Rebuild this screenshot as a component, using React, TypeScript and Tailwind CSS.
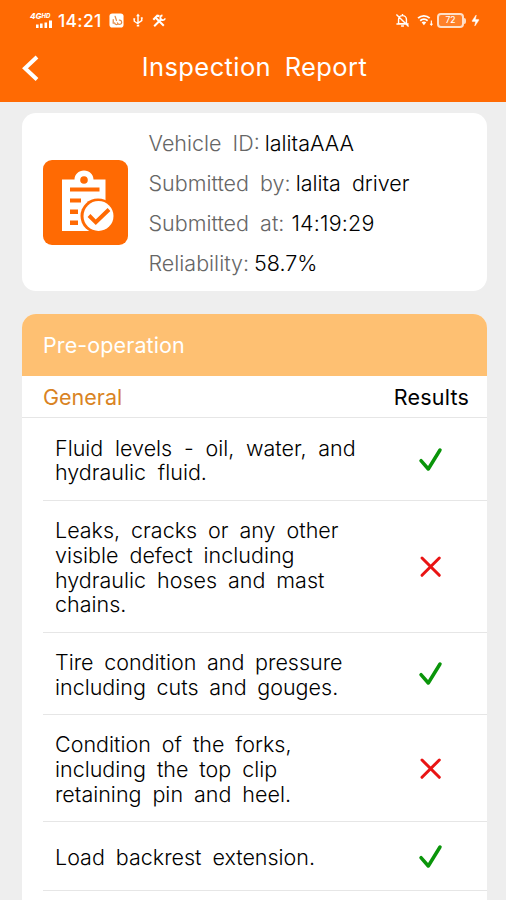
import { Zap } from 'lucide-react';
import { clsx } from 'clsx';

const details = [
  { label: 'Vehicle ID:', value: 'lalitaAAA' },
  { label: 'Submitted by:', value: 'lalita driver' },
  { label: 'Submitted at:', value: '14:19:29', className: 'pl-[2px] tracking-[0.2px]' },
  { label: 'Reliability:', value: '58.7%' },
];

const checks = [
  {
    text: 'Fluid levels - oil, water, and hydraulic fluid.',
    passed: true,
    height: 'h-[82.5px]',
    spacing: '[word-spacing:5.7px]',
  },
  {
    text: 'Leaks, cracks or any other visible defect including hydraulic hoses and mast chains.',
    passed: false,
    height: 'h-[132px]',
    spacing: '[word-spacing:4.9px]',
  },
  {
    text: 'Tire condition and pressure including cuts and gouges.',
    passed: true,
    height: 'h-[82.5px]',
    spacing: '[word-spacing:4.6px]',
  },
  {
    text: 'Condition of the forks, including the top clip retaining pin and heel.',
    passed: false,
    height: 'h-[107px]',
    spacing: '[word-spacing:4.9px]',
  },
  { text: 'Load backrest extension.', passed: true, height: 'h-[69px]', spacing: '[word-spacing:4.9px]' },
];

function StatusBar() {
  return (
    <div className="flex h-[41px] items-center justify-between pr-[26px] pl-[30px]">
      <div className="flex items-center">
        <div className="flex w-[23px] flex-col">
          <span className="flex items-start text-[8px] leading-[7px] font-extrabold italic">
            4G<span className="text-[6px] leading-[5px]">HD</span>
          </span>
          <svg viewBox="0 0 23 9" className="h-[9px] w-[23px]" fill="currentColor">
            <path d="M6 4.500h2.600v3.500H6zM10 3.500h2.600v4.500H10zM14.500 2.500h2.600v5.500h-2.600zM19 .500h3v7.500h-3z" />
          </svg>
        </div>
        <span className="ml-[5px] w-[45px] text-[17.5px] leading-5 font-medium tracking-[0.3px]">14:21</span>
        <svg viewBox="0 0 16 16" className="ml-[6px] size-[15px]" fill="none">
          <rect x="0.500" y="0.500" width="15" height="15" rx="3" fill="currentColor" />
          <path
            d="M4.500 7v4M6.500 3.500L8 8M6 10.500a2 2 0 0 0 3 1.500M11 7.500a2.300 2.300 0 1 1-2 3"
            stroke="#e38a45"
            strokeWidth="1.300"
            strokeLinecap="round"
          />
        </svg>
        <svg viewBox="0 0 12 16" className="ml-[8px] h-[15px] w-[12px]" fill="none" stroke="currentColor" strokeWidth="1.500">
          <path d="M6 2v10M2 6.500v2.300l4 2.700M10 5.500v2.700l-4 2.600" />
          <path d="M6 .500l2 3H4zM4.700 12.500h2.600v2H4.700zM1 5.500h2v1.500H1zM9 4.500h2v1.500H9z" fill="currentColor" stroke="none" />
        </svg>
        <svg viewBox="0 0 16 16" className="ml-[8px] size-[14px]" fill="none" stroke="currentColor">
          <path d="M1.500 6.500L6 2l2.500 .500" strokeWidth="2.500" />
          <path d="M4.500 4.500l9 9" strokeWidth="2.300" />
          <path d="M2.500 14L11 5.500" strokeWidth="2.300" />
          <path d="M12 1.500a2.800 2.800 0 1 0 3 3.500" strokeWidth="2" />
        </svg>
      </div>

      <div className="flex items-center">
        <svg viewBox="0 0 16 16" className="size-[15px]" fill="none" stroke="currentColor" strokeWidth="1.500">
          <path d="M3.800 11.500V7a4.200 4.200 0 0 1 8.400 0v4.500zM1.500 11.800h13M6.500 13.800h3M8 1v2M1.500 1.500l13 13" />
        </svg>
        <svg viewBox="0 0 18 14" className="ml-[7px] h-[13px] w-[17px]" fill="none" stroke="currentColor" strokeWidth="2">
          <path d="M1 4.500a9 9 0 0 1 12.500 0M3.300 7.200a6 6 0 0 1 8 0" />
          <path d="M4.800 9a4 4 0 0 1 5 0L7.300 12z" fill="currentColor" stroke="none" />
          <path d="M15.300 7v5M14 10.500l1.300 1.500 1.300-1.500" strokeWidth="1.200" />
        </svg>
        <div className="ml-[3px] flex h-[15px] w-[27px] items-center justify-center rounded-[4px] border-2 border-white/75 bg-white/15">
          <span className="text-[8.5px] leading-none font-medium">72</span>
        </div>
        <div className="h-[6px] w-[2px] rounded-r bg-white/75" />
        <Zap className="ml-[5px] h-[13px] w-[9px] fill-current" strokeWidth={1} preserveAspectRatio="none" />
      </div>
    </div>
  );
}

function ReportIcon() {
  return (
    <svg viewBox="0 0 85 85" className="size-[85px] shrink-0">
      <rect width="85" height="85" rx="9" fill="#ff6a03" />
      <path d="M19 19.500h12.500c0-5 4-9 9.500-9s9.500 4 9.500 9H62.500v51.500H19z" fill="#fff" />
      <circle cx="41" cy="20" r="3.800" fill="#ff6a03" />
      <path d="M27 27.500h29.500v4H27zM27 38.500h11v4H27zM27 49.500h8v4.500h-8zM27 60.500h8v4.500h-8z" fill="#ff6a03" />
      <circle cx="55" cy="56" r="17.500" fill="#ff6a03" />
      <circle cx="55.500" cy="56" r="15" fill="#fff" />
      <path d="M46 55.500l6.800 6.800L66 49.500" fill="none" stroke="#ff6a03" strokeWidth="4" />
    </svg>
  );
}

function ResultMark({ passed }: { passed: boolean }) {
  return (
    <svg
      viewBox="0 0 26 26"
      className={clsx('size-[26px]', passed ? 'text-[#0a950a]' : 'text-[#e91414]')}
      fill="none"
      stroke="currentColor"
      strokeLinecap="round"
      strokeLinejoin="round"
    >
      {passed ? (
        <path d="M4 14.700L11.300 23L23 4" strokeWidth="3.500" />
      ) : (
        <path d="M5 5L22.300 22.300M22.300 5L5 22.300" strokeWidth="3" />
      )}
    </svg>
  );
}

export default function App() {
  return (
    <div className="h-[900px] w-[506px] overflow-hidden bg-[#eeeeee] font-['Inter',sans-serif] text-black">
      <header className="h-[102px] bg-[#ff6a03] text-white">
        <StatusBar />
        <div className="grid h-[54px] grid-cols-[60px_1fr_60px] items-center">
          <button className="pl-[20px]" aria-label="Back">
            <svg viewBox="0 0 20 28" className="h-[28px] w-[20px]" fill="none" stroke="currentColor" strokeWidth="4">
              <path d="M17 3L5 14.300L17 25.500" />
            </svg>
          </button>
          <h1 className="pb-[2px] pl-[3px] text-center text-[25.5px] tracking-[0.4px] whitespace-nowrap [word-spacing:6px]">
            Inspection Report
          </h1>
        </div>
      </header>

      <main className="flex flex-col gap-[23px] pt-[11px] pr-[19px] pl-[22px]">
        {/* Summary */}
        <section className="flex h-[178px] items-center gap-[21px] rounded-[14px] bg-white pl-[20.5px]">
          <ReportIcon />
          <dl className="flex flex-col pt-[1px] text-[21.5px] leading-[40px] font-light [word-spacing:5px]">
            {details.map((item) => (
              <div key={item.label} className="flex gap-[5px] whitespace-nowrap">
                <dt className="text-[#666666]">{item.label}</dt>
                <dd className={clsx('font-[350]', item.className)}>{item.value}</dd>
              </div>
            ))}
          </dl>
        </section>

        {/* Checklist */}
        <section className="overflow-hidden rounded-t-[14px] bg-white">
          <h2 className="flex h-[62px] items-center bg-[#fec072] pt-px pl-[21px] text-[21.5px] tracking-[0.1px] text-white">
            Pre-operation
          </h2>
          <div className="flex h-[42px] items-center justify-between border-b border-[#e6e6e6] pt-[2px] pr-[18px] pl-[21px] text-[21.5px]">
            <span className="text-[#d98324]">General</span>
            <span className="tracking-[0.2px]">Results</span>
          </div>
          <ul className="pl-[21px]">
            {checks.map((check) => (
              <li
                key={check.text}
                className={clsx('flex items-center justify-between border-b border-[#e6e6e6] pr-[44px] pl-[12px]', check.height)}
              >
                <p className={clsx('w-[308px] pt-[3px] text-[21.5px] leading-[24.7px] font-[330]', check.spacing)}>
                  {check.text}
                </p>
                <ResultMark passed={check.passed} />
              </li>
            ))}
          </ul>
          <div className="h-10" />
        </section>
      </main>
    </div>
  );
}
